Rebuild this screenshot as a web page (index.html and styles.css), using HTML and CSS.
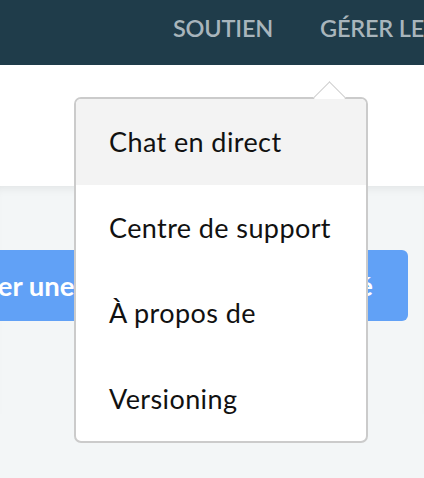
FILE: index.html
```html
<!DOCTYPE html>
<html lang="fr">
<head>
<meta charset="utf-8">
<title>Menu</title>
<link rel="stylesheet" href="styles.css">
</head>
<body>
<header class="topbar">
  <nav class="nav">
    <a class="nav-link">SOUTIEN</a>
    <a class="nav-link">GÉRER LES COMPTES</a>
  </nav>
</header>
<section class="band"></section>
<main class="content">
  <div class="cta">
    <span class="cta-left">Créer une</span>
    <span class="cta-right">nouvelle identité</span>
  </div>
</main>
<div class="dropdown">
  <span class="caret"></span>
  <ul class="menu">
    <li class="menu-item active">Chat en direct</li>
    <li class="menu-item">Centre de support</li>
    <li class="menu-item">À propos de</li>
    <li class="menu-item">Versioning</li>
  </ul>
</div>
</body>
</html>
```
FILE: styles.css
```css
html, body {
  margin: 0;
  padding: 0;
}
body {
  width: 424px;
  height: 478px;
  overflow: hidden;
  font-family: Lato, "Open Sans", sans-serif;
  background: #f3f6f7;
  position: relative;
}
.topbar {
  height: 65px;
  background: #1f3c4a;
  overflow: hidden;
}
.nav {
  display: flex;
  gap: 47px;
  padding: 14px 0 0 173px;
  white-space: nowrap;
}
.nav-link {
  color: #a8b5bc;
  font-size: 23.5px;
  font-weight: 600;
  letter-spacing: -0.2px;
}
.band {
  height: 121px;
  background: #fff;
}
.content {
  padding-top: 64px;
  box-shadow: inset 0 8px 10px -6px rgba(0, 0, 0, 0.08);
  height: 228px;
  box-sizing: border-box;
}
.cta {
  display: flex;
  justify-content: space-between;
  align-items: center;
  height: 71px;
  margin-left: -45px;
  width: 453px;
  padding-right: 35px;
  box-sizing: border-box;
  background: #61a1f6;
  border-radius: 6px;
  color: #fff;
  font-weight: 700;
  font-size: 27.5px;
  white-space: nowrap;
}
.dropdown {
  position: absolute;
  left: 74px;
  top: 97px;
  width: 294px;
  border: 2px solid #cbcbcb;
  border-radius: 7px;
  background: #fff;
  box-sizing: border-box;
}
.caret {
  position: absolute;
  left: 242px;
  top: -13px;
  width: 23px;
  height: 23px;
  background: #fff;
  border-left: 1.5px solid #cfcfcf;
  border-top: 1.5px solid #cfcfcf;
  transform: rotate(45deg);
  box-sizing: border-box;
}
.menu {
  list-style: none;
  margin: 0;
  padding: 0;
  position: relative;
  border-radius: 5px;
  overflow: hidden;
}
.menu-item {
  height: 85.5px;
  display: flex;
  align-items: center;
  padding-left: 33px;
  font-size: 27px;
  letter-spacing: 0.4px;
  color: #111;
}
.menu-item.active {
  background: #f3f3f3;
}
```
